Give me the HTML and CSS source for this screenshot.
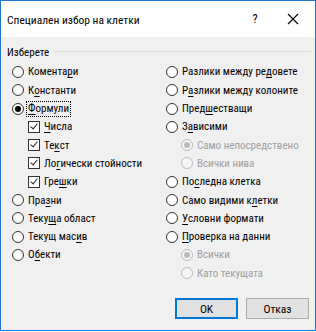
FILE: index.html
```html
<!DOCTYPE html>
<html lang="bg">
  <head>
    <meta charset="UTF-8" />
    <title>Специален избор на клетки</title>
    <link rel="stylesheet" href="styles.css">
  </head>
  <body>
    <div class="dialog">
      <div class="titlebar">
        <span class="title">Специален избор на клетки</span>
        <span class="help">?</span>
        <span class="close">
          <svg width="12" height="12" viewBox="0 0 12 12"><path d="M1 1 L11 11 M11 1 L1 11" stroke="#000" stroke-width="1.1"/></svg>
        </span>
      </div>
      <div class="content">
        <div class="legend"><span>Изберете</span><i class="line"></i></div>
        <div class="columns">
          <div class="col">
            <div class="row"><span class="radio"></span>Комента<u>р</u>и</div>
            <div class="row"><span class="radio"></span>К<u>о</u>нстанти</div>
            <div class="row"><span class="radio on"></span><span class="focus"><u>Ф</u>ормули</span></div>
            <div class="row sub"><span class="check"></span><u>Ч</u>исла</div>
            <div class="row sub"><span class="check"></span>Те<u>к</u>ст</div>
            <div class="row sub"><span class="check"></span>Ло<u>г</u>ически стойности</div>
            <div class="row sub"><span class="check"></span>Гре<u>ш</u>ки</div>
            <div class="row"><span class="radio"></span>Пра<u>з</u>ни</div>
            <div class="row"><span class="radio"></span>Теку<u>щ</u>а област</div>
            <div class="row"><span class="radio"></span>Текущ мас<u>и</u>в</div>
            <div class="row"><span class="radio"></span>О<u>б</u>екти</div>
          </div>
          <div class="col">
            <div class="row"><span class="radio"></span>Разлики между ре<u>д</u>овете</div>
            <div class="row"><span class="radio"></span>Р<u>а</u>злики между колоните</div>
            <div class="row"><span class="radio"></span>Пред<u>ш</u>естващи</div>
            <div class="row"><span class="radio"></span>З<u>а</u>висими</div>
            <div class="row sub dis"><span class="radio on"></span>Само непосредствено</div>
            <div class="row sub dis"><span class="radio"></span>Всички нива</div>
            <div class="row"><span class="radio"></span>По<u>с</u>ледна клетка</div>
            <div class="row"><span class="radio"></span>Само видими к<u>л</u>етки</div>
            <div class="row"><span class="radio"></span><u>У</u>словни формати</div>
            <div class="row"><span class="radio"></span><u>П</u>роверка на данни</div>
            <div class="row sub dis"><span class="radio on"></span>Всички</div>
            <div class="row sub dis"><span class="radio"></span>Като текущата</div>
          </div>
        </div>
        <div class="buttons">
          <button class="btn default">OK</button>
          <button class="btn">Отказ</button>
        </div>
      </div>
    </div>
  </body>
</html>
```

FILE: styles.css
```css
body {
  margin: 0;
  padding: 0;
  font-family: 'Roboto Condensed', Roboto, sans-serif;
  font-size: 11px;
  color: #000;
  background: #fff;
}
.dialog {
  width: 314px;
  height: 329px;
  border: 1px solid #1c78cc;
  box-shadow: 1px 2px 0 #111;
  background: #f0f0f0;
  display: flex;
  flex-direction: column;
}
.titlebar {
  height: 36px;
  background: #fff;
  display: flex;
  align-items: center;
  padding-left: 6px;
}
.title {
  flex: 1;
  padding-top: 1px;
  font-size: 11.5px;
}
.help {
  width: 36px;
  text-align: center;
  font-size: 12px;
  margin-right: 2px;
}
.close {
  width: 36px;
  display: flex;
  justify-content: center;
  padding-right: 4px;
}
.content {
  flex: 1;
  padding: 7px 4px 0 11px;
  display: flex;
  flex-direction: column;
}
.legend {
  display: flex;
  align-items: center;
  height: 16px;
  margin-left: -5px;
}
.legend .line {
  flex: 1;
  height: 1px;
  background: #dcdcdc;
  margin-left: 5px;
  margin-top: -1px;
}
.columns {
  display: grid;
  grid-template-columns: 154px 1fr;
  margin-top: 2.8px;
}
.row {
  height: 18.3px;
  display: flex;
  align-items: center;
  white-space: nowrap;
}
.row u {
  text-decoration-thickness: 1px;
  text-underline-offset: 2px;
}
.radio {
  width: 10px;
  height: 10px;
  border: 1px solid #333;
  border-radius: 50%;
  background: #fff;
  margin-right: 4px;
  position: relative;
  flex: none;
}
.radio.on::after {
  content: '';
  position: absolute;
  left: 2px;
  top: 2px;
  width: 6px;
  height: 6px;
  border-radius: 50%;
  background: #000;
}
.check {
  width: 10px;
  height: 10px;
  border: 1px solid #333;
  background: #fff;
  margin-right: 4px;
  position: relative;
  flex: none;
}
.check::after {
  content: '';
  position: absolute;
  left: 3px;
  top: 0px;
  width: 3px;
  height: 6px;
  border: solid #222;
  border-width: 0 1.3px 1.3px 0;
  transform: rotate(40deg);
}
.sub {
  padding-left: 16px;
}
.col:nth-child(2) .sub {
  padding-left: 15px;
}
.dis {
  color: #a0a0a0;
}
.dis .radio {
  border-color: #bcbcbc;
  background: #f5f5f5;
}
.dis .radio.on::after {
  background: #bcbcbc;
}
.focus {
  outline: 1px dotted #000;
  outline-offset: 0;
  padding: 0 1px;
  margin-left: -1px;
  line-height: 14px;
}
.buttons {
  display: flex;
  justify-content: flex-end;
  gap: 8px;
  margin-top: 16px;
  padding-right: 2px;
}
.btn {
  width: 63px;
  height: 21px;
  font-family: inherit;
  font-size: 11.5px;
  color: #000;
  background: #e1e1e1;
  border: 1px solid #adadad;
  padding: 0;
}
.btn.default {
  border: 2px solid #0078d7;
}
```
